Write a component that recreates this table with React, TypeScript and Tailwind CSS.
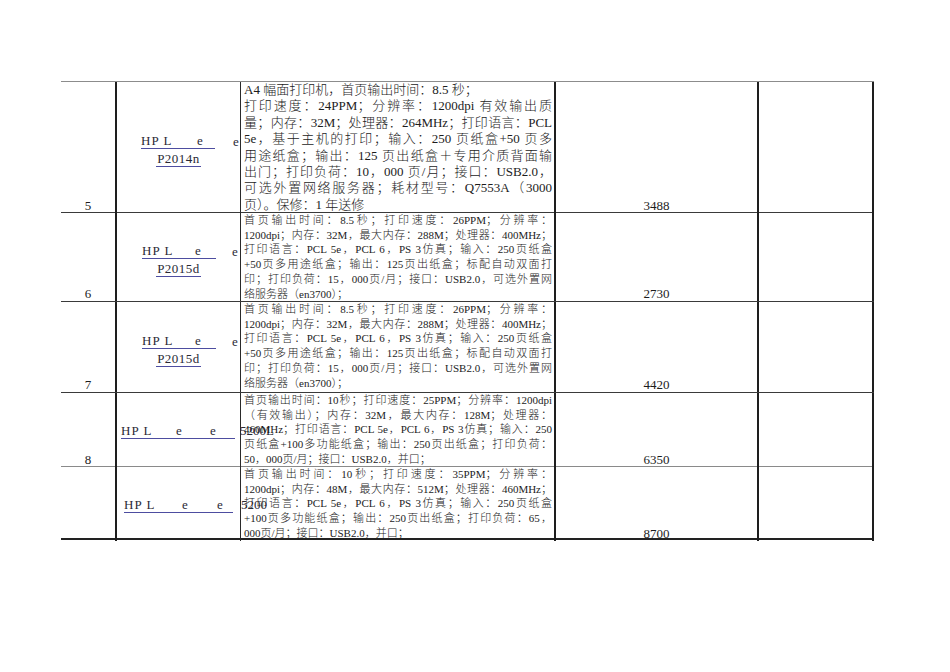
const FONT = "font-['Liberation_Serif','Noto_Sans_CJK_SC',serif]"

interface Row {
  no: string
  price: string
  height: string
  rule: string
  big?: boolean
  name: React.ReactNode
  lines: string[]
}

function TwoLineName({ model, first, gap, pad }: { model: string; first: string; gap: string; pad: string }) {
  return (
    <div className="flex h-full flex-col justify-center pt-[5px] text-[13px] leading-[15px] text-[#2a2a35]">
      <div className={`flex items-end ${pad}`}>
        <span className="inline-flex w-[74px] shrink-0 border-b border-[#4d4da0]">
          <span className={`shrink-0 tracking-[1px] ${first}`}>HP L</span>
          <span>e</span>
        </span>
        <span className={`shrink-0 ${gap}`}>e</span>
      </div>
      <div className="mt-[2px] flex justify-center">
        <span className="border-b border-[#4d4da0] px-[1px] tracking-[0.5px]">{model}</span>
      </div>
    </div>
  )
}

function OneLineName({ pad, width, a, b, tail, tailGap }: { pad: string; width: string; a: string; b: string; tail: string; tailGap: string }) {
  return (
    <div className={`flex h-full items-center whitespace-nowrap pt-[2px] text-[13px] leading-[15px] text-[#2a2a35] ${pad}`}>
      <span className={`inline-flex shrink-0 border-b border-[#4d4da0] ${width}`}>
        <span className={`shrink-0 tracking-[1px] ${a}`}>HP L</span>
        <span className={`shrink-0 ${b}`}>e</span>
        <span className="shrink-0">e</span>
      </span>
      <span className={`shrink-0 ${tailGap}`}>{tail}</span>
    </div>
  )
}

const rows: Row[] = [
  {
    no: '5',
    price: '3488',
    height: 'h-[131px]',
    rule: 'border-b border-[#3a3a3a]',
    big: true,
    name: <TwoLineName model="P2014n" first="w-[56px]" gap="ml-[18px]" pad="pl-[24px]" />,
    lines: [
      'A4 幅面打印机，首页输出时间：8.5 秒；',
      '打印速度：24PPM；分辨率：1200dpi 有效输出质',
      '量；内存：32M；处理器：264MHz；打印语言：PCL',
      '5e，基于主机的打印；输入：250 页纸盒+50 页多',
      '用途纸盒；输出：125 页出纸盒＋专用介质背面输',
      '出门；打印负荷：10，000 页/月；接口：USB2.0，',
      '可选外置网络服务器；耗材型号：Q7553A（3000',
      '页）。保修：1 年送修',
    ],
  },
  {
    no: '6',
    price: '2730',
    height: 'h-[89px]',
    rule: 'border-b border-[#3a3a3a]',
    name: <TwoLineName model="P2015d" first="w-[53px]" gap="ml-[16px]" pad="pl-[25px]" />,
    lines: [
      '首页输出时间：8.5秒；打印速度：26PPM；分辨率：',
      '1200dpi；内存：32M，最大内存：288M；处理器：400MHz；',
      '打印语言：PCL 5e，PCL 6，PS 3仿真；输入：250页纸盒',
      '+50页多用途纸盒；输出：125页出纸盒；标配自动双面打',
      '印；打印负荷：15，000页/月；接口：USB2.0，可选外置网',
      '络服务器（en3700）；',
    ],
  },
  {
    no: '7',
    price: '4420',
    height: 'h-[91px]',
    rule: 'border-b border-[#3a3a3a]',
    name: <TwoLineName model="P2015d" first="w-[53px]" gap="ml-[16px]" pad="pl-[25px]" />,
    lines: [
      '首页输出时间：8.5秒；打印速度：26PPM；分辨率：',
      '1200dpi；内存：32M，最大内存：288M；处理器：400MHz；',
      '打印语言：PCL 5e，PCL 6，PS 3仿真；输入：250页纸盒',
      '+50页多用途纸盒；输出：125页出纸盒；标配自动双面打',
      '印；打印负荷：15，000页/月；接口：USB2.0，可选外置网',
      '络服务器（en3700）；',
    ],
  },
  {
    no: '8',
    price: '6350',
    height: 'h-[74px]',
    rule: 'border-b border-[#8a8a8a]',
    name: <OneLineName pad="pl-[4px]" width="w-[114px]" a="w-[55px]" b="w-[34px]" tail="5200L" tailGap="ml-[5px]" />,
    lines: [
      '首页输出时间：10秒；打印速度：25PPM；分辨率：1200dpi',
      '（有效输出）；内存：32M，最大内存：128M；处理器：',
      '460MHz；打印语言：PCL 5e，PCL 6，PS 3仿真；输入：250',
      '页纸盒+100多功能纸盒；输出：250页出纸盒；打印负荷：',
      '50，000页/月；接口：USB2.0，并口；',
    ],
  },
  {
    no: '',
    price: '8700',
    height: 'h-[73px]',
    rule: 'border-b-2 border-[#222]',
    name: <OneLineName pad="pl-[7px]" width="w-[109px]" a="w-[58px]" b="w-[35px]" tail="5200" tailGap="ml-[8px]" />,
    lines: [
      '首页输出时间：10秒；打印速度：35PPM；分辨率：',
      '1200dpi；内存：48M，最大内存：512M；处理器：460MHz；',
      '打印语言：PCL 5e，PCL 6，PS 3仿真；输入：250页纸盒',
      '+100页多功能纸盒；输出：250页出纸盒；打印负荷：65，',
      '000页/月；接口：USB2.0，并口；',
    ],
  },
]

function SpecText({ lines, big }: { lines: string[]; big?: boolean }) {
  return (
    <div className={big ? 'pl-[3px] pr-[2px] text-[13px] leading-[16.4px]' : 'pl-[3px] pr-[2px] text-[11px] leading-[14.7px]'}>
      {lines.map((line, i) => (
        <div
          key={i}
          className={
            i < lines.length - 1 && (!big || i > 0)
              ? 'whitespace-nowrap text-justify [text-align-last:justify]'
              : 'whitespace-nowrap'
          }
        >
          {line}
        </div>
      ))}
    </div>
  )
}

export default function App() {
  return (
    <div className={`min-h-[672px] w-[950px] bg-white pt-[81px] pl-[61px] font-light text-[#1c1c1c] ${FONT}`}>
      <div className="w-[813px] border-t border-[#8c8c8c]">
        {rows.map((row, idx) => (
          <div key={idx} className={`grid grid-cols-[56px_124px_315px_203px_115px] ${row.height} ${row.rule}`}>
            <div className="flex items-end justify-center border-r-2 border-[#1e1e1e] text-[13px] leading-[15px]">
              {row.no}
            </div>
            <div className="border-r border-[#2a2a2a]">{row.name}</div>
            <div className="border-r-2 border-[#1e1e1e]">
              <SpecText lines={row.lines} big={row.big} />
            </div>
            <div className="flex items-end justify-center border-r-2 border-[#1e1e1e] text-[13px] leading-[15px]">
              {row.price}
            </div>
            <div className="border-r-2 border-[#1e1e1e]" />
          </div>
        ))}
      </div>
    </div>
  )
}
